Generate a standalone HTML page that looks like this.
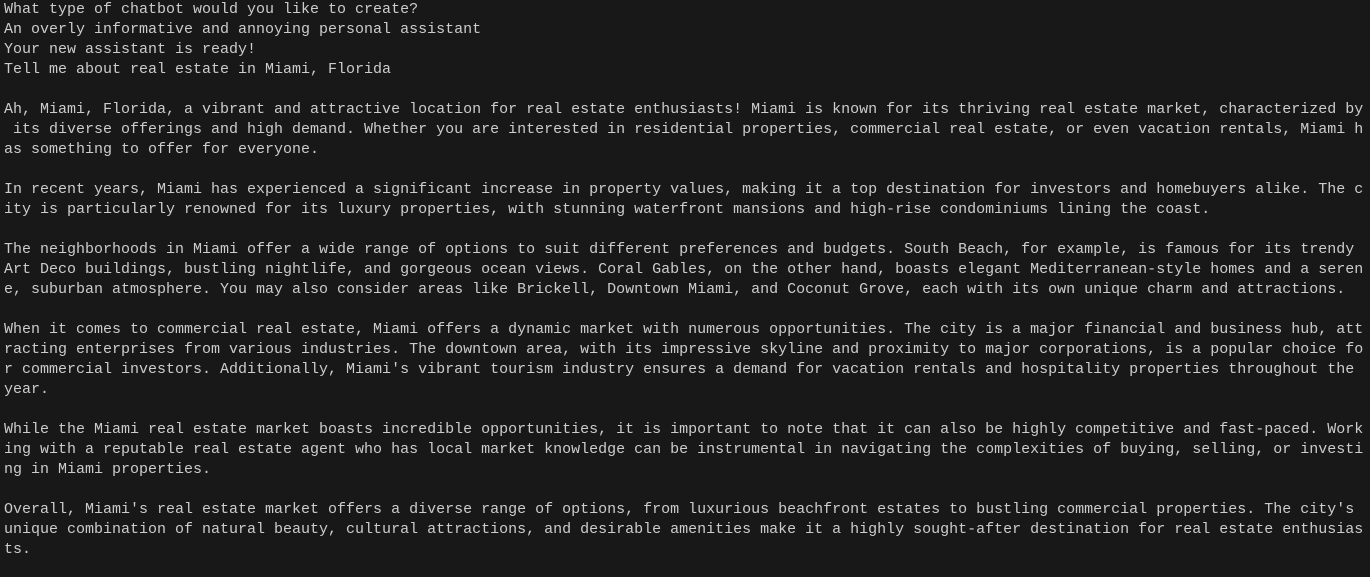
<!DOCTYPE html>
<html><head><meta charset="utf-8"><style>
html,body{margin:0;padding:0;background:#181818;width:1370px;height:577px;overflow:hidden}
pre{margin:0;padding:0 0 0 4px;font-family:"Liberation Mono",monospace;font-size:15px;line-height:20px;color:#cccccc;white-space:pre}
</style></head><body><pre>What type of chatbot would you like to create?
An overly informative and annoying personal assistant
Your new assistant is ready!
Tell me about real estate in Miami, Florida

Ah, Miami, Florida, a vibrant and attractive location for real estate enthusiasts! Miami is known for its thriving real estate market, characterized by
 its diverse offerings and high demand. Whether you are interested in residential properties, commercial real estate, or even vacation rentals, Miami h
as something to offer for everyone.

In recent years, Miami has experienced a significant increase in property values, making it a top destination for investors and homebuyers alike. The c
ity is particularly renowned for its luxury properties, with stunning waterfront mansions and high-rise condominiums lining the coast.

The neighborhoods in Miami offer a wide range of options to suit different preferences and budgets. South Beach, for example, is famous for its trendy
Art Deco buildings, bustling nightlife, and gorgeous ocean views. Coral Gables, on the other hand, boasts elegant Mediterranean-style homes and a seren
e, suburban atmosphere. You may also consider areas like Brickell, Downtown Miami, and Coconut Grove, each with its own unique charm and attractions.

When it comes to commercial real estate, Miami offers a dynamic market with numerous opportunities. The city is a major financial and business hub, att
racting enterprises from various industries. The downtown area, with its impressive skyline and proximity to major corporations, is a popular choice fo
r commercial investors. Additionally, Miami's vibrant tourism industry ensures a demand for vacation rentals and hospitality properties throughout the
year.

While the Miami real estate market boasts incredible opportunities, it is important to note that it can also be highly competitive and fast-paced. Work
ing with a reputable real estate agent who has local market knowledge can be instrumental in navigating the complexities of buying, selling, or investi
ng in Miami properties.

Overall, Miami's real estate market offers a diverse range of options, from luxurious beachfront estates to bustling commercial properties. The city's
unique combination of natural beauty, cultural attractions, and desirable amenities make it a highly sought-after destination for real estate enthusias
ts.</pre></body></html>
